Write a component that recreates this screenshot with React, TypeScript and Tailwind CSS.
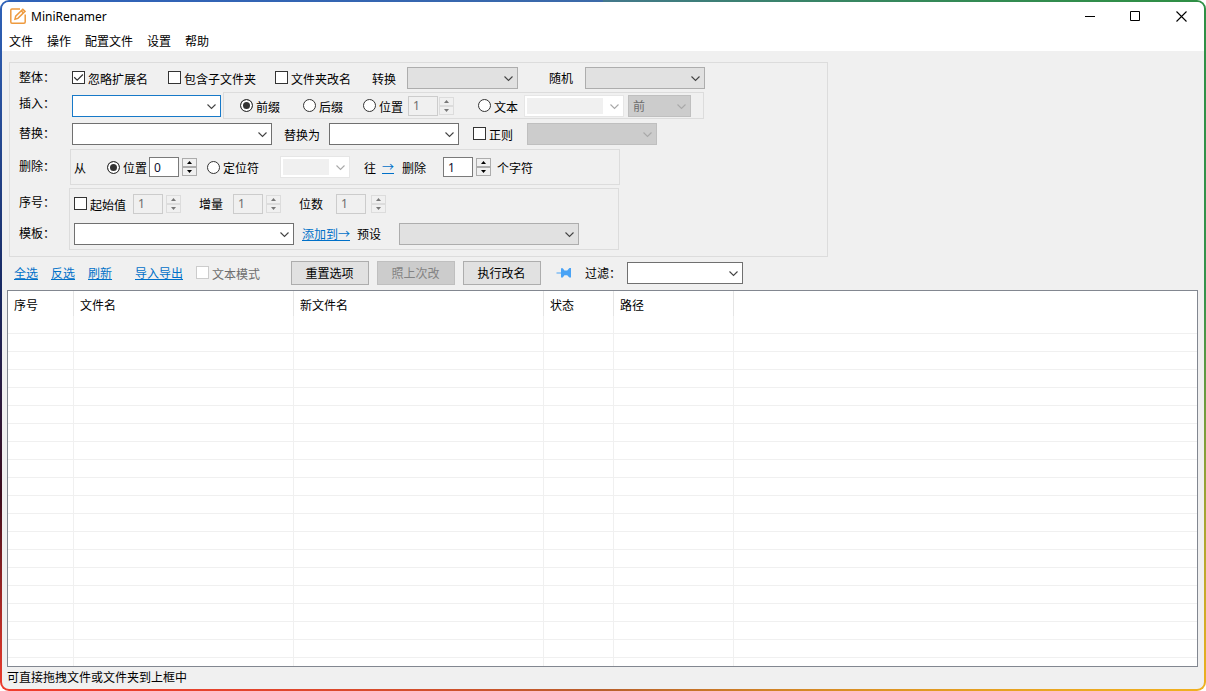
import React from 'react';

type Tone = 'normal' | 'focus' | 'shaded' | 'faded' | 'disabled';

const boxTone: Record<Tone, string> = {
  normal: 'border-[#707070] bg-white text-black',
  focus: 'border-[#1779c8] bg-white text-black',
  shaded: 'border-[#adadad] bg-[#e1e1e1] text-black',
  faded: 'border-[#e6e6e6] bg-[#f0f0f0] text-[#6d6d6d] shadow-[inset_0_0_0_2px_#ffffff,inset_-20px_0_0_0_#ffffff]',
  disabled: 'border-[#bfbfbf] bg-[#cccccc] text-[#6d6d6d]',
};

function Chevron({ muted = false }: { muted?: boolean }) {
  return (
    <svg className="pointer-events-none absolute right-[5px] top-[7px] h-[9px] w-[9px]" viewBox="0 0 9 9" fill="none" stroke={muted ? '#a9a9a9' : '#444'} strokeWidth="1.1" aria-hidden="true">
      <path d="M0.5 2.5 L4.5 6.5 L8.5 2.5" />
    </svg>
  );
}

function Combo({ id, label, width, tone = 'normal' }: { id?: string; label?: string; width: string; tone?: Tone }) {
  const faded = tone === 'faded';
  return (
    <div className={`relative h-[22px] shrink-0 ${width}`}>
      <input
        id={id}
        type="text"
        aria-label={label}
        disabled={faded}
        className={`block h-full w-full rounded-none border pl-1 pr-5 outline-none ${boxTone[tone]}`}
      />
      <Chevron muted={faded} />
    </div>
  );
}

function Drop({ id, label, width, tone = 'shaded', text = '' }: { id?: string; label?: string; width: string; tone?: Tone; text?: string }) {
  return (
    <div className={`relative h-[22px] shrink-0 ${width}`}>
      <select
        id={id}
        aria-label={label}
        disabled={tone === 'disabled'}
        className={`block h-full w-full appearance-none rounded-none border pl-1 pr-5 opacity-100 outline-none ${boxTone[tone]}`}
      >
        <option>{text}</option>
      </select>
      <Chevron muted={tone === 'disabled'} />
    </div>
  );
}

function Spin({ label, value, off = false, gap = 'gap-[3px]' }: { label: string; value: string; off?: boolean; gap?: string }) {
  const btn = `flex h-[9px] w-[15px] items-center justify-center border ${off ? 'border-[#dcdcdc] bg-[#f0f0f0] text-[#777]' : 'border-[#acacac] bg-[#f0f0f0] text-black'}`;
  return (
    <div className={`flex shrink-0 items-center ${gap}`}>
      <input
        type="text"
        aria-label={label}
        defaultValue={value}
        disabled={off}
        className={`h-5 w-[30px] rounded-none border pl-1 font-['Noto_Sans',sans-serif] text-xs outline-none ${off ? 'border-[#cccccc] bg-[#f0f0f0] text-[#6d6d6d]' : 'border-[#7a7a7a] bg-white text-[#101030]'}`}
      />
      <div className="flex flex-col">
        <button type="button" aria-label={`${label} +`} disabled={off} className={btn}>
          <svg className="h-[3px] w-[5px]" viewBox="0 0 5 3" fill="currentColor"><path d="M0 3 L2.5 0 L5 3Z" /></svg>
        </button>
        <button type="button" aria-label={`${label} -`} disabled={off} className={btn}>
          <svg className="h-[3px] w-[5px]" viewBox="0 0 5 3" fill="currentColor"><path d="M0 0 L2.5 3 L5 0Z" /></svg>
        </button>
      </div>
    </div>
  );
}

function Check({ text, width, checked = false, off = false }: { text: string; width: string; checked?: boolean; off?: boolean }) {
  return (
    <label className={`flex shrink-0 items-center gap-[3px] pb-px ${width} ${off ? 'text-[#6d6d6d]' : ''}`}>
      <span className="relative h-[13px] w-[13px] shrink-0">
        <input
          type="checkbox"
          defaultChecked={checked}
          disabled={off}
          className={`peer block h-[13px] w-[13px] appearance-none border bg-white ${off ? 'border-[#cccccc]' : 'border-[#333]'}`}
        />
        <svg className="pointer-events-none absolute inset-0 hidden h-[13px] w-[13px] peer-checked:block" viewBox="0 0 13 13" fill="none" stroke="#333" strokeWidth="1.2">
          <path d="M2.2 6.3 L5.2 9.2 L10.9 3.5" />
        </svg>
      </span>
      <span className="pt-[3px]">{text}</span>
    </label>
  );
}

function Radio({ text, name, width, checked = false }: { text: string; name: string; width: string; checked?: boolean }) {
  return (
    <label className={`flex shrink-0 items-center gap-[3px] ${width}`}>
      <input
        type="radio"
        name={name}
        defaultChecked={checked}
        className="h-[13px] w-[13px] shrink-0 appearance-none rounded-full border border-[#333] bg-white checked:bg-[#333] checked:shadow-[inset_0_0_0_2px_#ffffff]"
      />
      <span className="pt-0.5">{text}</span>
    </label>
  );
}

function RowLabel({ children }: { children: React.ReactNode }) {
  return <span className="w-[50px] shrink-0 pb-0.5 pl-[9px]">{children}</span>;
}

function TextLink({ children }: { children: React.ReactNode }) {
  return <a href="#" className="shrink-0 text-[#0070c8] underline underline-offset-1">{children}</a>;
}

function PushButton({ children, off = false }: { children: React.ReactNode; off?: boolean }) {
  return (
    <button
      type="button"
      disabled={off}
      className={`h-6 w-[78px] shrink-0 border pr-px ${off ? 'border-[#bfbfbf] bg-[#cccccc] text-[#838383]' : 'border-[#adadad] bg-[#e1e1e1] text-black'}`}
    >
      {children}
    </button>
  );
}

const menus = ['文件', '操作', '配置文件', '设置', '帮助'];

const columns = [
  { title: '序号', width: 'w-[66px]' },
  { title: '文件名', width: 'w-[220px]' },
  { title: '新文件名', width: 'w-[250px]' },
  { title: '状态', width: 'w-[70px]' },
  { title: '路径', width: 'w-[120px]' },
];

const rows = Array.from({ length: 20 }, (_, i) => i);

export default function App() {
  return (
    <div className="flex h-screen flex-col rounded-[9px] bg-[conic-gradient(#43788c_0deg,#2f8f45_60deg,#35924c_85deg,#f0b020_120deg,#b8602c_180deg,#f03c2c_240deg,#3c0c1c_256deg,#182860_275deg,#2f62b8_300deg,#3c6aa8_360deg)] p-[2px] font-['Noto_Sans_CJK_SC',sans-serif] text-xs leading-4 text-black">
      <div className="flex min-h-0 flex-1 flex-col overflow-hidden rounded-[7px] bg-[#f0f0f0]">
        <header className="bg-white">
          <div className="flex h-7 items-center pl-2">
            <svg className="h-4 w-4" viewBox="0 0 16 16" fill="none" stroke="#ee9a3e" strokeWidth="1.5" aria-hidden="true">
              <path d="M10 0.9 H2 Q0.8 0.9 0.8 2 V14 Q0.8 15.2 2 15.2 H14 Q15.2 15.2 15.2 14 V6.5" />
              <path d="M5 11.2 L5.7 8.2 L12.8 1.2 L15 3.4 L7.9 10.4 Z M11.2 2.8 L13.4 5" />
            </svg>
            <h1 className="flex-1 pl-[5px] pt-0.5 font-['Noto_Sans',sans-serif]">MiniRenamer</h1>
            <div className="flex">
              <button type="button" aria-label="最小化" className="flex h-7 w-[45px] items-center justify-center">
                <svg className="h-[11px] w-[11px]" viewBox="0 0 11 11" stroke="#000"><path d="M0 5.5 H10" /></svg>
              </button>
              <button type="button" aria-label="最大化" className="flex h-7 w-[45px] items-center justify-center">
                <svg className="h-[11px] w-[11px]" viewBox="0 0 11 11" fill="none" stroke="#000"><path d="M0.5 0.5 H9.5 V9.5 H0.5 Z" /></svg>
              </button>
              <button type="button" aria-label="关闭" className="flex h-7 w-[46px] items-center justify-center">
                <svg className="h-[11px] w-[11px]" viewBox="0 0 11 11" stroke="#000" strokeWidth="1.1"><path d="M0.5 0.5 L10.5 10.5 M10.5 0.5 L0.5 10.5" /></svg>
              </button>
            </div>
          </div>
          <nav className="flex h-[21px] items-center gap-3.5 pl-[7px] pt-px">
            {menus.map((m) => (
              <button key={m} type="button">{m}</button>
            ))}
          </nav>
        </header>

        <main className="flex min-h-0 flex-1 flex-col pl-[5px] pr-[6px] pt-[11px]">
          <section className="ml-0.5 flex w-[819px] flex-col border border-[#dcdcdc] pb-1.5">
            <div className="flex h-[29px] items-center">
              <RowLabel>整体：</RowLabel>
              <div className="flex items-center pl-3">
                <Check text="忽略扩展名" width="w-24" checked />
                <Check text="包含子文件夹" width="w-[107px]" />
                <Check text="文件夹改名" width="w-[97px]" />
                <label htmlFor="convert" className="w-[35px] pt-0.5">转换</label>
                <Drop id="convert" width="w-[111px]" />
                <label htmlFor="random" className="w-[67px] pl-[31px]">随机</label>
                <Drop id="random" width="w-[120px]" />
              </div>
            </div>

            <div className="flex h-[27px] items-center">
              <RowLabel><span className="block pb-1">插入：</span></RowLabel>
              <div className="flex items-center gap-0.5 pl-3">
                <Combo label="插入" width="w-[149px]" tone="focus" />
                <div className="flex h-[27px] w-[481px] items-center border border-[#dcdcdc] pl-4">
                  <Radio name="insert" text="前缀" width="w-[63px]" checked />
                  <Radio name="insert" text="后缀" width="w-[60px]" />
                  <Radio name="insert" text="位置" width="w-[45px]" />
                  <Spin label="插入位置" value="1" off gap="gap-px" />
                  <div className="w-6" />
                  <Radio name="insert" text="文本" width="w-[46px]" />
                  <Combo label="插入文本" width="w-[100px]" tone="faded" />
                  <div className="w-1" />
                  <Drop label="前后" width="w-[63px]" tone="disabled" text="前" />
                </div>
              </div>
            </div>

            <div className="flex h-[30px] items-center">
              <RowLabel>替换：</RowLabel>
              <div className="flex items-center pl-3">
                <Combo label="替换" width="w-[200px]" />
                <label htmlFor="replacement" className="w-[57px] pl-3 pt-0.5">替换为</label>
                <Combo id="replacement" width="w-[130px]" />
                <div className="w-3.5" />
                <Check text="正则" width="w-[54px]" />
                <Drop label="正则" width="w-[130px]" tone="disabled" />
              </div>
            </div>

            <div className="flex h-9 items-center">
              <RowLabel>删除：</RowLabel>
              <div className="ml-2.5 flex h-9 w-[550px] items-center border border-[#dcdcdc] pl-[3px]">
                <span className="w-[33px] pt-0.5">从</span>
                <Radio name="remove" text="位置" width="w-[42px]" checked />
                <Spin label="删除位置" value="0" />
                <div className="w-2.5" />
                <Radio name="remove" text="定位符" width="w-[73px]" />
                <Combo label="定位符" width="w-[70px]" tone="faded" />
                <span className="w-8 pl-3.5 pt-0.5">往</span>
                <TextLink>→</TextLink>
                <span className="w-[49px] pl-2 pt-0.5">删除</span>
                <Spin label="删除字符数" value="1" />
                <span className="pl-1.5 pt-0.5">个字符</span>
              </div>
            </div>

            <div className="flex pt-[3px]">
              <div className="flex flex-col">
                <div className="flex h-[29px] items-center"><RowLabel>序号：</RowLabel></div>
                <div className="flex h-[33px] items-center pt-px"><RowLabel>模板：</RowLabel></div>
              </div>
              <div className="ml-[9px] w-[550px] border border-[#dcdcdc] pl-1">
                <div className="flex h-[29px] items-center">
                  <Check text="起始值" width="w-[59px]" />
                  <Spin label="起始值" value="1" off />
                  <span className="w-[52px] pl-[18px]">增量</span>
                  <Spin label="增量" value="1" off />
                  <span className="w-[55px] pl-[18px]">位数</span>
                  <Spin label="位数" value="1" off gap="gap-[5px]" />
                </div>
                <div className="flex h-[31px] items-center pt-px">
                  <Combo label="模板" width="w-[220px]" />
                  <div className="w-2" />
                  <TextLink>添加到→</TextLink>
                  <label htmlFor="preset" className="w-[49px] pl-[7px]">预设</label>
                  <Drop id="preset" width="w-[180px]" />
                </div>
              </div>
            </div>
          </section>

          <div className="flex h-[33px] items-center pb-px pl-[7px]">
            <div className="flex w-[121px] gap-[13px]">
              <TextLink>全选</TextLink>
              <TextLink>反选</TextLink>
              <TextLink>刷新</TextLink>
            </div>
            <TextLink>导入导出</TextLink>
            <div className="w-[13px]" />
            <Check text="文本模式" width="w-[95px]" off />
            <div className="flex gap-2">
              <PushButton>重置选项</PushButton>
              <PushButton off>照上次改</PushButton>
              <PushButton>执行改名</PushButton>
            </div>
            <button type="button" aria-label="置顶" className="ml-[15px] h-4 w-4 shrink-0">
              <svg className="h-4 w-4" viewBox="0 0 16 16" fill="#4aa3f5" aria-hidden="true">
                <path d="M0.5 7.4 H5 V3.2 H6.8 L8.4 5.6 H11.2 L13.4 3 H15 V12.6 H13.4 L11.2 10.2 H8.4 L6.8 12.4 H5 V8.4 H0.5 Z" />
              </svg>
            </button>
            <label htmlFor="filter" className="w-[55px] shrink-0 pl-[13px]">过滤：</label>
            <Combo id="filter" width="w-[116px]" />
          </div>

          <div className="min-h-0 flex-1 overflow-hidden border border-[#828790] bg-white">
            <table className="w-full table-fixed border-separate border-spacing-0">
              <thead>
                <tr className="h-[25px]">
                  {columns.map((c) => (
                    <th key={c.title} scope="col" className={`border-r border-[#e5e5e5] p-0 pl-1.5 pt-0.5 text-left font-normal ${c.width}`}>{c.title}</th>
                  ))}
                  <td />
                </tr>
              </thead>
              <tbody>
                {rows.map((r) => (
                  <tr key={r} className="h-[18px]">
                    {columns.map((c) => (
                      <td key={c.title} className="border-b border-r border-[#f0f0f0] p-0" />
                    ))}
                    <td className="border-b border-[#f0f0f0] p-0" />
                  </tr>
                ))}
              </tbody>
            </table>
          </div>
        </main>

        <footer className="flex h-[22px] items-center pb-0.5 pl-[5px]">可直接拖拽文件或文件夹到上框中</footer>
      </div>
    </div>
  );
}
